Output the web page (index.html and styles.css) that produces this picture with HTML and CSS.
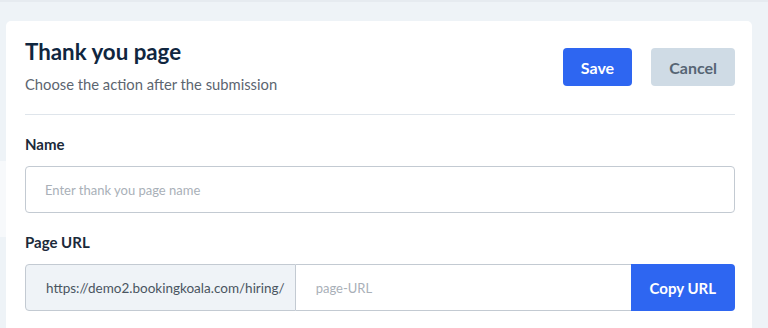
FILE: index.html
```html
<!DOCTYPE html>
<html lang="en">
<head>
<meta charset="utf-8">
<title>Thank you page</title>
<link rel="stylesheet" href="styles.css">
</head>
<body>
<div class="topline"></div>
<div class="side-peek"></div>
<main class="page">
  <section class="card">
    <header class="card-head">
      <div class="head-text">
        <h1 class="title">Thank you page</h1>
        <p class="subtitle">Choose the action after the submission</p>
      </div>
      <div class="actions">
        <button class="btn btn-primary" type="button">Save</button>
        <button class="btn btn-muted" type="button">Cancel</button>
      </div>
    </header>
    <div class="divider"></div>
    <div class="field">
      <label class="label" for="name">Name</label>
      <input class="input" id="name" type="text" placeholder="Enter thank you page name">
    </div>
    <div class="field">
      <label class="label" for="url">Page URL</label>
      <div class="url-group">
        <span class="url-prefix">https://demo2.bookingkoala.com/hiring/</span>
        <input class="url-input" id="url" type="text" placeholder="page-URL">
        <button class="btn btn-primary url-btn" type="button">Copy URL</button>
      </div>
    </div>
  </section>
</main>
</body>
</html>
```

FILE: styles.css
```css
* { box-sizing: border-box; }

html, body {
  margin: 0;
  padding: 0;
  height: 100%;
  overflow: hidden;
}

body {
  background: #eef3f7;
  font-family: Lato, "Open Sans", Arial, sans-serif;
  position: relative;
}

.topline {
  height: 2px;
  background: #e6ebf0;
}

.side-peek {
  position: absolute;
  left: 0;
  top: 161px;
  width: 6px;
  height: 76px;
  background: #f7f9fb;
}

.page {
  padding: 19px 16px 0 6px;
  position: relative;
}

.card {
  background: #ffffff;
  border-radius: 5px;
  padding: 17px 17px 40px 19px;
  min-height: 420px;
}

.card-head {
  display: flex;
  justify-content: space-between;
  align-items: flex-start;
}

.title {
  margin: 0;
  font-size: 22.3px;
  line-height: 28px;
  font-weight: 700;
  color: #10263f;
}

.subtitle {
  margin: 8px 0 0;
  font-size: 14.75px;
  line-height: 20px;
  color: #5c6570;
}

.actions {
  display: flex;
  gap: 19px;
  margin-top: 10px;
}

.btn {
  font-family: inherit;
  height: 38px;
  padding: 0 18px;
  border: 0;
  border-radius: 4px;
  font-size: 16px;
  font-weight: 700;
  cursor: pointer;
}

.btn-primary {
  background: #2e66f1;
  color: #ffffff;
}

.btn-muted {
  background: #cfdbe5;
  color: #566574;
}

.divider {
  height: 1px;
  background: #dfe5eb;
  margin-top: 20px;
}

.field {
  margin-top: 19px;
}

.field + .field {
  margin-top: 19px;
}

.label {
  display: block;
  font-size: 15px;
  line-height: 20px;
  font-weight: 700;
  color: #1b2a3a;
  margin-bottom: 12px;
}

.input {
  display: block;
  width: 100%;
  height: 47px;
  border: 1px solid #c3cad2;
  border-radius: 4px;
  padding: 0 19px;
  font-family: inherit;
  font-size: 13px;
  color: #333;
  outline: none;
}

.input::placeholder,
.url-input::placeholder {
  color: #a9b0b8;
}

.url-group {
  display: flex;
  height: 47px;
}

.url-prefix {
  display: flex;
  align-items: center;
  padding: 0 10px 0 20px;
  background: #eff3f7;
  border: 1px solid #c3cad2;
  border-right: 1px solid #c3cad2;
  border-radius: 4px 0 0 4px;
  font-size: 13.5px;
  color: #4a5561;
  white-space: nowrap;
}

.url-input {
  flex: 1;
  min-width: 0;
  border: 1px solid #c3cad2;
  border-left: 0;
  border-right: 0;
  padding: 0 20px;
  font-family: inherit;
  font-size: 13px;
  outline: none;
}

.url-btn {
  height: 47px;
  border-radius: 0 4px 4px 0;
  padding: 0 19px;
  font-size: 15px;
}
```
